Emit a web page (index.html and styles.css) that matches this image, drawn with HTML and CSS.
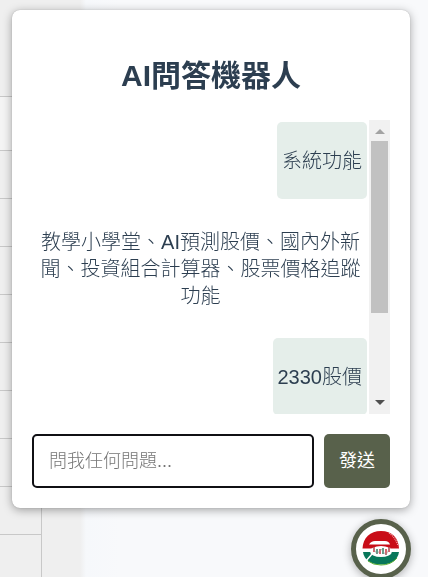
FILE: index.html
```
<!DOCTYPE html>
<html lang="zh-Hant">
<head>
<meta charset="utf-8">
<meta name="viewport" content="width=device-width, initial-scale=1">
<title>AI問答機器人</title>
<link rel="stylesheet" href="styles.css">
</head>
<body>
<div class="backdrop" aria-hidden="true">
  <div class="side">
    <div class="row first"></div>
    <div class="row light"></div>
    <div class="row"></div>
    <div class="row"></div>
    <div class="row"></div>
    <div class="row"></div>
    <div class="row"></div>
    <div class="row"></div>
    <div class="row"></div>
    <div class="row"></div>
    <div class="row"></div>
  </div>
</div>

<section class="chat">
  <h1 class="title">AI問答機器人</h1>
  <div class="history">
    <div class="messages">
      <div class="message user"><p>系統功能</p></div>
      <div class="message bot"><p>教學小學堂、AI預測股價、國內外新聞、投資組合計算器、股票價格追蹤功能</p></div>
      <div class="message user"><p>2330股價</p></div>
    </div>
    <div class="scrollbar" aria-hidden="true">
      <svg class="arrow" viewBox="0 0 21 21"><path d="M6 14L11 9L16 14Z" fill="#a3a3a3"/></svg>
      <div class="thumb"></div>
      <svg class="arrow" viewBox="0 0 21 21"><path d="M6 7L11 12L16 7Z" fill="#505050"/></svg>
    </div>
  </div>
  <form class="ask">
    <input class="question" type="text" aria-label="問題" placeholder="問我任何問題...">
    <button class="send" type="button">發送</button>
  </form>
</section>

<button class="launcher" type="button" aria-label="AI問答機器人">
  <svg viewBox="0 0 50 50">
    <path d="M6.500 24.500C7 14 14 7 25 7C36 7 42.500 14 43 24.500Z" fill="#c90d18"/>
    <path d="M13 20.500Q15 17 19 17H29Q33 17 34 20.500Z" fill="#fff"/>
    <path d="M33 9Q40 14 42 22" fill="none" stroke="#f2b4b8" stroke-width="1.200" stroke-dasharray="1 1"/>
    <path d="M7 28H43C42 36 35 40.500 25 40.500C15 40.500 8 36 7 28Z" fill="#08775a"/>
    <path d="M12 37Q17 41 25 41Q35 41 41 34" fill="none" stroke="#58ac32" stroke-width="1"/>
    <path d="M10 37L16 30" stroke="#fff" stroke-width="1.500"/>
    <ellipse cx="25" cy="27.500" rx="11" ry="5.500" fill="#fff"/>
    <path d="M18 23V28M24 25V30M30 25V31M33 23V28" stroke="#c93640" stroke-width="1.500"/>
    <path d="M21 25V30M27 24V30" stroke="#347b61" stroke-width="1.500"/>
    <path d="M17 24L21 30L25 25L30 31L34 23" fill="none" stroke="#8b9690" stroke-width=".6"/>
  </svg>
</button>
</body>
</html>
```

FILE: styles.css
```
* {
  box-sizing: border-box;
}

body {
  margin: 0;
  color: #2c3e50;
  background: #f8f9fb;
  font-family: "Liberation Sans", "Noto Sans CJK TC", sans-serif;
  font-size: 20px;
  font-weight: 300;
  line-height: 27px;
}

.backdrop {
  height: 100vh;
  overflow: hidden;
  background: linear-gradient(to right, #efefef 80px, #f6f8fb 86px, #f8f9fb 120px);
}

.side {
  width: 42px;
}

.row {
  height: 48px;
  border-right: 1px solid #c8c8c8;
  border-bottom: 1px solid #c8c8c8;
}

.row.first {
  height: 97px;
  border-right: 0;
}

.row.light {
  height: 54px;
  background: #f4f4f4;
}

.chat {
  position: fixed;
  top: 10px;
  left: 12px;
  right: 18px;
  padding: 20px;
  background: #fff;
  border-radius: 8px;
  box-shadow: 0 0 1px rgba(0, 0, 0, 0.3), 0 2px 10px rgba(0, 0, 0, 0.35);
}

.title {
  margin: 0;
  padding: 26px 0 24px;
  font-size: 30px;
  line-height: 40px;
  font-weight: bold;
  text-align: center;
}

.history {
  display: flex;
  height: 294px;
}

.messages {
  flex: 1;
  display: flex;
  flex-direction: column;
  gap: 4px;
  padding: 2px 2px 0;
  overflow: hidden;
}

.message {
  flex: none;
  padding: 6px 5px 4px;
  border-radius: 5px;
  text-align: center;
}

.message p {
  margin: 20px 0;
}

.user {
  align-self: flex-end;
  background: #e5eeea;
}

.scrollbar {
  width: 21px;
  display: flex;
  flex-direction: column;
  background: #f1f1f1;
}

.arrow {
  display: block;
  width: 21px;
  height: 21px;
}

.thumb {
  height: 172px;
  margin: 0 2px auto;
  background: #c1c1c1;
}

.ask {
  display: flex;
  gap: 10px;
  margin: 20px 0 0;
}

.question,
.send {
  height: 54px;
  border-radius: 5px;
  font: inherit;
  font-size: 18px;
}

.question {
  flex: 1;
  min-width: 0;
  padding: 0 15px;
  border: 2px solid #101014;
  background: #fff;
  outline: none;
}

.question::placeholder {
  color: #757575;
}

.send {
  padding: 0 15px;
  border: 0;
  color: #fff;
  background: #58614b;
  font-weight: 400;
}

.launcher {
  position: fixed;
  right: 17px;
  bottom: -2px;
  width: 60px;
  height: 60px;
  padding: 0;
  border: 5px solid #58614b;
  border-radius: 50%;
  background: #fff;
  box-shadow: 0 2px 8px rgba(0, 0, 0, 0.3);
}

.launcher svg {
  display: block;
}
```
